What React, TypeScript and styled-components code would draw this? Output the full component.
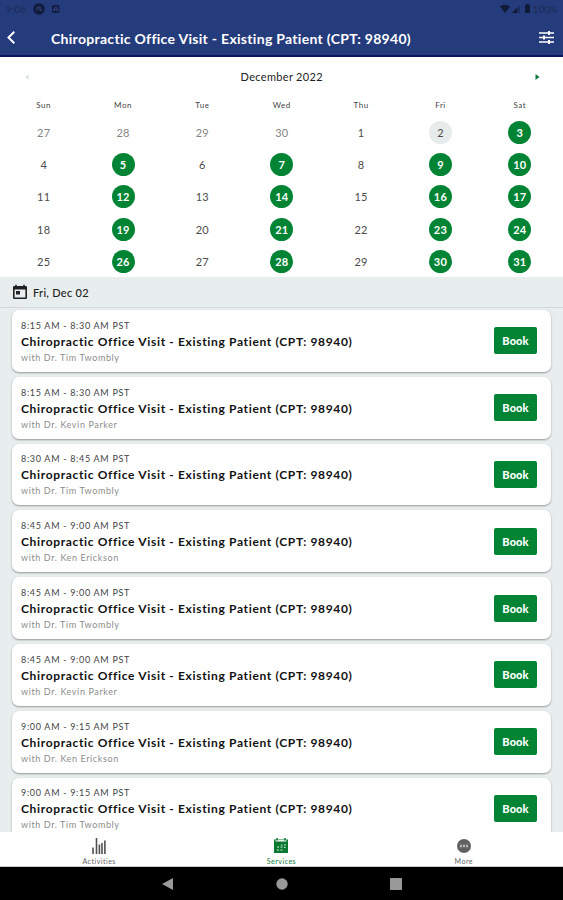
import React from 'react';
import styled, { createGlobalStyle } from 'styled-components';

const GlobalStyle = createGlobalStyle`
  * { box-sizing: border-box; }
  body { margin: 0; font-family: Lato, "Open Sans", sans-serif; background: #fff; }
`;

const Screen = styled.div`
  width: 563px;
  height: 900px;
  display: flex;
  flex-direction: column;
  overflow: hidden;
  background: #fff;
`;

const Header = styled.header`
  flex: none;
  height: 57px;
  background: #253c7c;
  border-bottom: 2px solid #0b1763;
`;

const StatusBar = styled.div`
  height: 18px;
  padding: 0 5px 0 6px;
  display: flex;
  align-items: center;
  color: #1b2b57;
  font-size: 10px;
  svg { display: block; }
`;

const StatusTime = styled.span`
  width: 27px;
  letter-spacing: 0.1px;
`;

const StatusRight = styled.div`
  margin-left: auto;
  display: flex;
  align-items: center;
  gap: 2px;
`;

const AppBar = styled.div`
  height: 39px;
  padding: 1px 8px 0 6px;
  display: flex;
  align-items: center;
  svg { display: block; }
`;

const BarTitle = styled.h1`
  margin: 0 auto 0 33px;
  padding-top: 1px;
  color: #fff;
  font-size: 14px;
  font-weight: 700;
  line-height: 20px;
  letter-spacing: 0.3px;
  white-space: nowrap;
`;

const Calendar = styled.section`
  flex: none;
  height: 220px;
  padding: 0 3.5px 0 4px;
`;

const MonthRow = styled.div`
  height: 39px;
  padding: 0 20px 0 20px;
  display: flex;
  align-items: center;
  justify-content: space-between;
  svg { display: block; }
`;

const Month = styled.span`
  font-size: 11px;
  letter-spacing: 0.32px;
  color: #222;
`;

const Grid = styled.div`
  display: grid;
  grid-template-columns: repeat(7, 1fr);
  justify-items: center;
  align-items: center;
`;

const WeekGrid = styled(Grid)`
  height: 18px;
  font-size: 8px;
  letter-spacing: 0.5px;
  color: #444;
`;

const DayGrid = styled(Grid)`
  margin-top: 2px;
  grid-auto-rows: 32.3px;
`;

type DayKind = 'out' | 'plain' | 'today' | 'open';

const Day = styled.span<{ $kind: DayKind }>`
  width: 23px;
  height: 23px;
  border-radius: 50%;
  display: flex;
  align-items: center;
  justify-content: center;
  font-size: 11px;
  letter-spacing: 0.2px;
  font-weight: ${p => (p.$kind === 'open' ? 700 : 400)};
  color: ${p => ({ out: '#858585', plain: '#4c4c4c', today: '#4c4c4c', open: '#fff' })[p.$kind]};
  background: ${p => ({ out: 'none', plain: 'none', today: '#e7ebec', open: '#028434' })[p.$kind]};
`;

const DateBar = styled.div`
  flex: none;
  height: 31px;
  padding: 0 12px;
  display: flex;
  align-items: center;
  gap: 5px;
  background: #e8edee;
  border-bottom: 1px solid #d3d8d9;
  color: #222;
  font-size: 11px;
  font-weight: 500;
  letter-spacing: 0.3px;
`;

const List = styled.main`
  flex: 1;
  min-height: 0;
  overflow: hidden;
  padding: 2px 12px 0;
  display: flex;
  flex-direction: column;
  gap: 5px;
  background: #e8edee;
`;

const Card = styled.article`
  flex: none;
  height: 61.8px;
  padding: 0 14px 0 9px;
  display: flex;
  align-items: center;
  justify-content: space-between;
  background: #fff;
  border-radius: 7px;
  box-shadow: 0 1px 2px rgba(0, 0, 0, 0.36);
`;

const CardText = styled.div`
  display: flex;
  flex-direction: column;
  padding-top: 2px;
  white-space: nowrap;
`;

const Time = styled.span`
  font-size: 9px;
  line-height: 14px;
  letter-spacing: 0.69px;
  color: #444;
`;

const Service = styled.span`
  font-size: 12px;
  line-height: 18px;
  font-weight: 700;
  letter-spacing: 0.66px;
  color: #111;
`;

const Provider = styled.span`
  font-size: 9px;
  line-height: 14px;
  letter-spacing: 0.61px;
  color: #8c8c8c;
`;

const BookButton = styled.button`
  width: 43px;
  height: 27px;
  padding: 0;
  border: 0;
  border-radius: 2px;
  background: #028434;
  color: #fff;
  font: 900 11px Lato, sans-serif;
  letter-spacing: 0.1px;
`;

const TabBar = styled.nav`
  flex: none;
  height: 35px;
  display: grid;
  grid-template-columns: 1fr 1fr 1fr;
  padding: 0 8px;
  background: #fff;
  border-bottom: 1px solid #ccc;
`;

const Tab = styled.div<{ $active?: boolean }>`
  display: flex;
  flex-direction: column;
  align-items: center;
  padding-top: 6px;
  gap: 3px;
  font-size: 7px;
  line-height: 9px;
  letter-spacing: 0.5px;
  color: ${p => (p.$active ? '#0b7e36' : '#666')};
  svg { display: block; }
`;

const SystemBar = styled.div`
  flex: none;
  height: 33px;
  display: flex;
  align-items: center;
  justify-content: center;
  gap: 102px;
  background: #000;
`;

const weekdays = ['Sun', 'Mon', 'Tue', 'Wed', 'Thu', 'Fri', 'Sat'];
const days = Array.from({ length: 35 }, (_, i) => {
  const inMonth = i >= 4;
  const label = inMonth ? i - 3 : 27 + i;
  let kind: DayKind = 'plain';
  if (!inMonth) kind = 'out';
  else if (label === 2) kind = 'today';
  else if ([1, 3, 5, 6].includes(i % 7)) kind = 'open';
  return { label, kind };
});

const slots = [
  ['8:15 AM - 8:30 AM PST', 'Tim Twombly'],
  ['8:15 AM - 8:30 AM PST', 'Kevin Parker'],
  ['8:30 AM - 8:45 AM PST', 'Tim Twombly'],
  ['8:45 AM - 9:00 AM PST', 'Ken Erickson'],
  ['8:45 AM - 9:00 AM PST', 'Tim Twombly'],
  ['8:45 AM - 9:00 AM PST', 'Kevin Parker'],
  ['9:00 AM - 9:15 AM PST', 'Ken Erickson'],
  ['9:00 AM - 9:15 AM PST', 'Tim Twombly'],
];
const service = 'Chiropractic Office Visit - Existing Patient (CPT: 98940)';

const NoticeIcons = () => (
  <svg width="28" height="12" viewBox="0 0 28 12">
    <circle cx="6" cy="6" r="5.7" fill="#101a39" />
    <path d="M3.8 8V6a2.2 2.2 0 0 1 4.4 0v2M4.5 4l3.3 4" fill="none" stroke="#31477f" />
    <rect x="19" y="2" width="7.5" height="8" rx="1.2" fill="#14204a" />
    <path d="M21 8V6l1.7-2 1.8 2v2M21 6.5h3.5" fill="none" stroke="#31477f" strokeWidth=".9" />
  </svg>
);

const SignalIcons = () => (
  <svg width="31" height="10" viewBox="0 0 31 10">
    <path d="M0 2.6Q5-1 10 2.6L5 9Z" fill="#101a39" />
    <path d="M12 9 20 1v8z" fill="#1d2d60" />
    <path d="M12 9 17 4v5z" fill="#101a39" />
    <path d="M26 0h3v1h1v8h-5V1h1z" fill="#101a39" />
  </svg>
);

export default function App() {
  return (
    <Screen>
      <GlobalStyle />
      <Header>
        <StatusBar>
          <StatusTime>9:06</StatusTime>
          <NoticeIcons />
          <StatusRight>
            <SignalIcons />
            <span>100%</span>
          </StatusRight>
        </StatusBar>
        <AppBar>
          <svg width="12" height="16" viewBox="0 0 12 16">
            <path d="M8.3 1.7 2.5 7.5 8.3 13.3" fill="none" stroke="#fff" strokeWidth="2" />
          </svg>
          <BarTitle>{service}</BarTitle>
          <svg width="17" height="16" viewBox="0 0 17 16">
            <path d="M1 3h15M1 7.5h15M1 12h15" stroke="#fff" strokeWidth="1.7" />
            <path d="M11 1v4M6 5.5v4M11 10v4" stroke="#fff" strokeWidth="2" />
          </svg>
        </AppBar>
      </Header>
      <Calendar>
        <MonthRow>
          <svg width="6" height="8" viewBox="0 0 6 8"><path d="M4.5 1.5v5L1.5 4z" fill="#cfe0dc" /></svg>
          <Month>December 2022</Month>
          <svg width="6" height="8" viewBox="0 0 6 8"><path d="M1.5 1v6L5.5 4z" fill="#0a7a3a" /></svg>
        </MonthRow>
        <WeekGrid>{weekdays.map(d => <span key={d}>{d}</span>)}</WeekGrid>
        <DayGrid>
          {days.map((d, i) => <Day key={i} $kind={d.kind}>{d.label}</Day>)}
        </DayGrid>
      </Calendar>
      <DateBar>
        <svg width="16" height="16" viewBox="0 0 16 16">
          <path d="M1 3.2Q1 2 2.2 2H13.8Q15 2 15 3.2V13.8Q15 15 13.8 15H2.2Q1 15 1 13.8ZM2.6 5.5V13.4H13.4V5.5Z" fill="#222" fillRule="evenodd" />
          <path d="M4 .8v2M12 .8v2" stroke="#222" strokeWidth="1.5" />
          <rect x="4" y="7" width="4" height="3.5" fill="#222" />
        </svg>
        <span>Fri, Dec 02</span>
      </DateBar>
      <List>
        {slots.map(([time, name], i) => (
          <Card key={i}>
            <CardText>
              <Time>{time}</Time>
              <Service>{service}</Service>
              <Provider>with Dr. {name}</Provider>
            </CardText>
            <BookButton>Book</BookButton>
          </Card>
        ))}
      </List>
      <TabBar>
        <Tab>
          <svg width="16" height="16" viewBox="0 0 16 16">
            <path d="M2 9.5V16M5.5 0v16M8.4 6.5V16M11 5V16M13.9 2.5V16" fill="none" stroke="#505050" strokeWidth="1.6" />
          </svg>
          <span>Activities</span>
        </Tab>
        <Tab $active>
          <svg width="16" height="16" viewBox="0 0 16 16">
            <path d="M1 1.5h14V15H1z" fill="#08792f" />
            <path d="M2.5 2.8h11" stroke="#fff" strokeWidth="1.4" />
            <path d="M4 0v2.5M12 0v2.5" stroke="#08792f" strokeWidth="1.5" />
            <path d="M4 9h2M7.5 9h2M11 7h2M4 12h2M7.5 12h2M8 7h1.5M11 9.5h1.5" stroke="#d7eadd" strokeWidth="1.2" />
          </svg>
          <span>Services</span>
        </Tab>
        <Tab>
          <svg width="16" height="16" viewBox="0 0 16 16">
            <circle cx="8" cy="8" r="7" fill="#616161" />
            <path d="M4 8h2M7 8h2M10 8h2" stroke="#bbb" strokeWidth="2.5" />
          </svg>
          <span>More</span>
        </Tab>
      </TabBar>
      <SystemBar>
        <svg width="12" height="12" viewBox="0 0 12 12"><path d="M0 6 11 0v12z" fill="#999" /></svg>
        <svg width="12" height="12" viewBox="0 0 12 12"><circle cx="6" cy="6" r="5.7" fill="#999" /></svg>
        <svg width="12" height="12" viewBox="0 0 12 12"><rect width="12" height="12" rx="1" fill="#999" /></svg>
      </SystemBar>
    </Screen>
  );
}
